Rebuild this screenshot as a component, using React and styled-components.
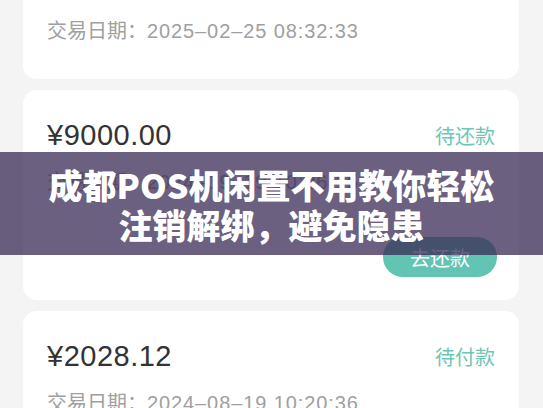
import React from 'react';
import styled, { createGlobalStyle } from 'styled-components';

// 交易记录列表（滚动到中间的一屏）+ 标题横幅

const GlobalStyle = createGlobalStyle`
  html, body {
    margin: 0;
    padding: 0;
    background: #f4f4f4;
    font-family: "Liberation Sans", "Noto Sans CJK SC", sans-serif;
  }
`;

const orders = [
  { id: 1, amount: '¥6800.00', status: '已完成', date: '2025–02–25 08:32:33' },
  { id: 2, amount: '¥9000.00', status: '待还款', date: '2024–09–19 10:26:15', action: '去还款' },
  { id: 3, amount: '¥2028.12', status: '待付款', date: '2024–08–19 10:20:36' },
];

const App = () => {
  return (
    <>
      <GlobalStyle />
      <Screen>
        <OrderList>
          {orders.map((item) => (
            <OrderCard key={item.id} $hasAction={!!item.action}>
              <TopRow>
                <Amount>{item.amount}</Amount>
                <Status>{item.status}</Status>
              </TopRow>
              <DateRow>
                <span>交易日期：</span>
                <DateValue>{item.date}</DateValue>
              </DateRow>
              {item.action && (
                <ActionRow>
                  <PayButton type="button">{item.action}</PayButton>
                </ActionRow>
              )}
            </OrderCard>
          ))}
        </OrderList>
        <Banner>
          成都POS机闲置不用教你轻松
          <br />
          注销解绑，避免隐患
        </Banner>
      </Screen>
    </>
  );
};

export default App;

const Screen = styled.div`
  position: relative;
  width: 543px;
  height: 408px;
  overflow: hidden;
  background: #f4f4f4;
`;

const OrderList = styled.div`
  margin-top: -61px;
  padding: 0 24px 0 23px;
  display: flex;
  flex-direction: column;
  gap: 11px;
`;

const OrderCard = styled.div`
  padding: 30px 22px ${({ $hasAction }) => ($hasAction ? '23px' : '33px')} 24px;
  background: #ffffff;
  border-radius: 14px;
`;

const TopRow = styled.div`
  height: 30px;
  display: flex;
  justify-content: space-between;
  align-items: center;
`;

const Amount = styled.div`
  font-size: 29px;
  letter-spacing: 0.5px;
  color: #333333;
`;

const Status = styled.div`
  margin-right: 2px;
  font-size: 20px;
  color: #6cc6b5;
`;

const DateRow = styled.div`
  margin-top: 17px;
  height: 30px;
  line-height: 30px;
  font-size: 20px;
  color: #a0a0a0;
  white-space: nowrap;
`;

const DateValue = styled.span`
  letter-spacing: 0.9px;
`;

const ActionRow = styled.div`
  margin-top: 40px;
  display: flex;
  justify-content: flex-end;
`;

const PayButton = styled.button`
  width: 114px;
  height: 40px;
  border: none;
  border-radius: 20px;
  background: #62c4b2;
  color: #ffffff;
  font-family: inherit;
  font-size: 20px;
`;

const Banner = styled.div`
  position: absolute;
  top: 152px;
  left: 0;
  right: 0;
  height: 103px;
  box-sizing: border-box;
  padding-top: 13px;
  background: rgba(58, 43, 86, 0.75);
  color: #ffffff;
  font-family: "Noto Sans CJK SC", sans-serif;
  font-weight: 900;
  font-size: 34px;
  line-height: 40px;
  text-align: center;
`;
